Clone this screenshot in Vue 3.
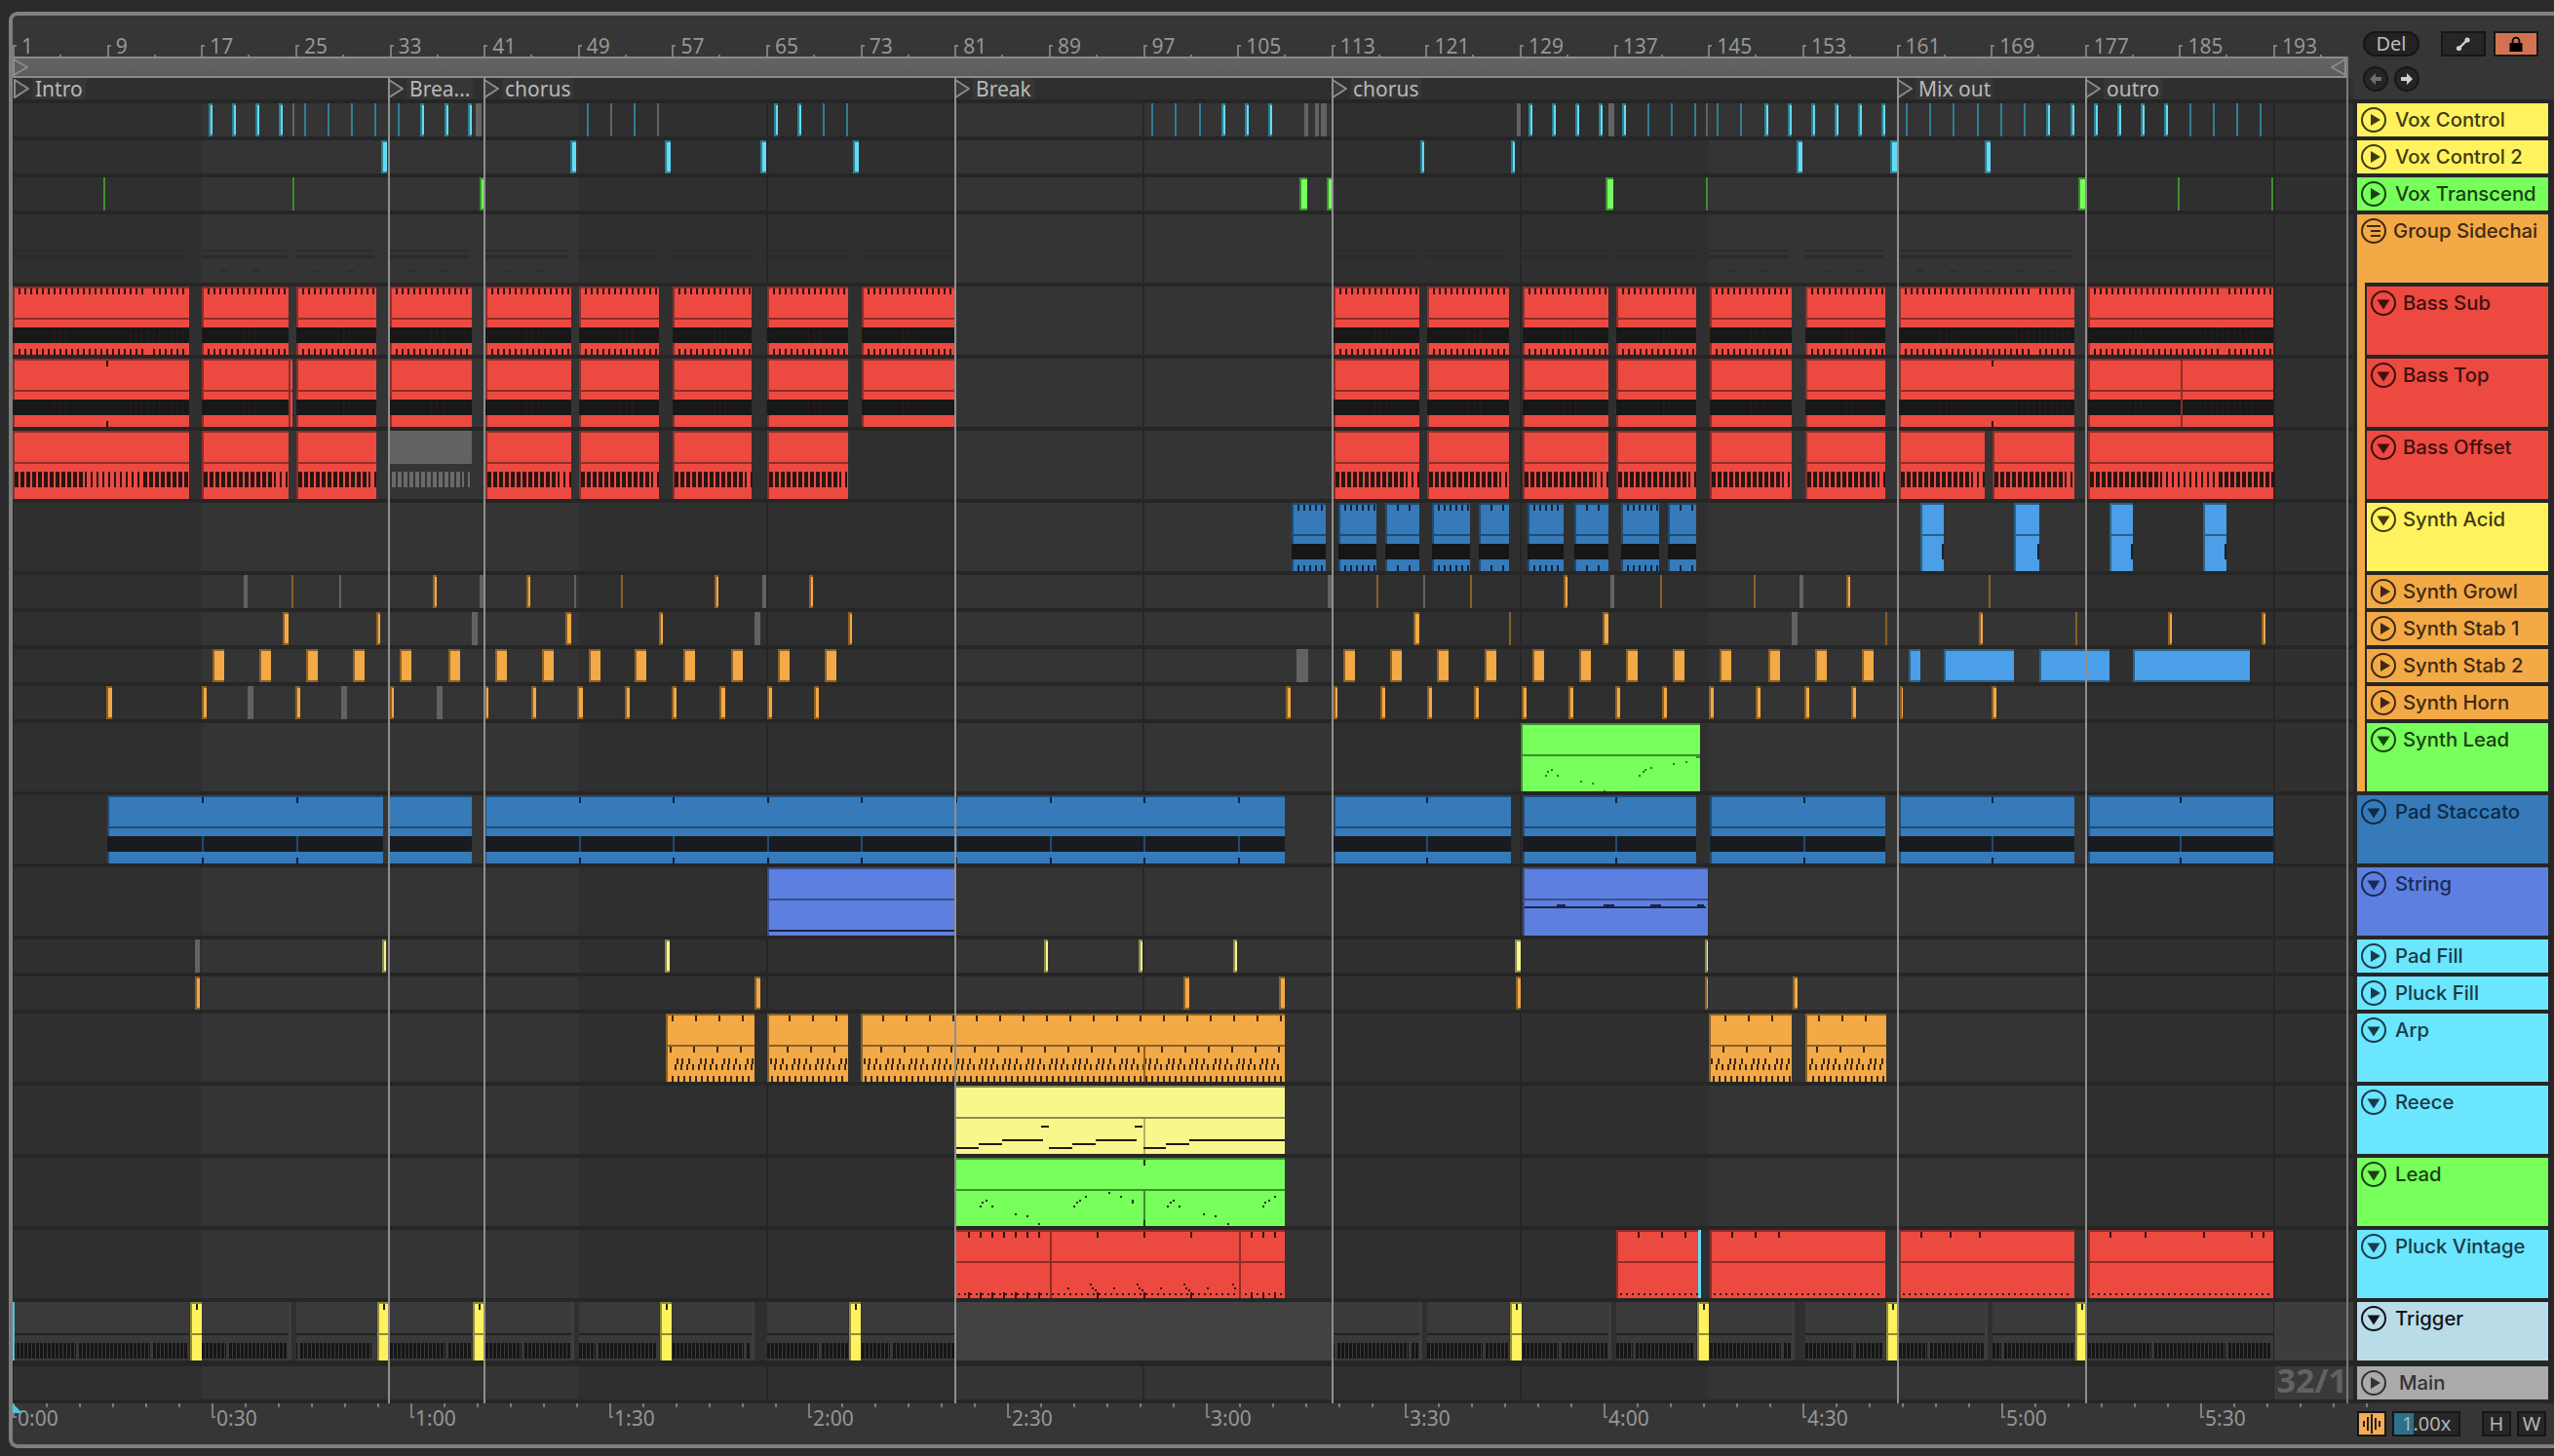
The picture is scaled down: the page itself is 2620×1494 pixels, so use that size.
<template>
  <div class="app">
    <div class="frame">
      <div class="top">
        <div class="top-left">
          <div class="beats">
            <div v-for="b in beatLabels" :key="b" class="beat"><span>{{ b }}</span></div>
          </div>
          <div class="loop">
            <svg class="loop-tri" width="16" height="18"><polygon points="1,1 15,9 1,17" /></svg>
            <svg class="loop-tri" width="16" height="18"><polygon points="15,1 1,9 15,17" /></svg>
          </div>
          <div class="locators">
            <div v-for="l in locators" :key="l.x" class="locator" :style="{ left: (l.x - X0) + 'px' }">
              <svg width="16" height="20"><polygon points="1,1 15,10 1,19" /></svg>
              <span>{{ l.name }}</span>
            </div>
          </div>
        </div>
        <div class="controls">
          <div class="ctl-row">
            <div class="del">Del</div>
            <div class="sq sq-link">
              <svg width="16" height="16" viewBox="0 0 16 16">
                <path d="M4 12 L12 4" stroke="#cfcfcf" stroke-width="2.4" />
                <circle cx="3.5" cy="12.5" r="2.6" fill="#cfcfcf" />
                <circle cx="12" cy="4" r="2.6" fill="#cfcfcf" />
              </svg>
            </div>
            <div class="sq sq-lock">
              <svg width="16" height="16" viewBox="0 0 16 16">
                <path d="M4.6 8 V5 a3.4 3.4 0 0 1 6.8 0 V8" fill="none" stroke="#000" stroke-width="1.8" />
                <rect x="1.5" y="7" width="13" height="9" fill="#000" />
              </svg>
            </div>
          </div>
          <div class="ctl-row ctl-arrows">
            <div class="arrow">
              <svg width="16" height="14" viewBox="0 0 16 14"><path d="M2 7 L8 1 V5 H14 V9 H8 V13 Z" fill="#6f6f6f" /></svg>
            </div>
            <div class="arrow">
              <svg width="16" height="14" viewBox="0 0 16 14"><path d="M14 7 L8 1 V5 H2 V9 H8 V13 Z" fill="#d0d0d0" /></svg>
            </div>
          </div>
        </div>
      </div>

      <div class="rows">
        <div v-for="t in tracks" :key="t.name" class="track" :class="['h' + t.h, { last: t.name === 'Main' }]">
          <div class="lane">
            <svg class="art" width="2401" :height="t.h" shape-rendering="crispEdges">
              <rect v-for="(r, i) in t.art" :key="i" :x="r.x" :y="r.y" :width="r.w" :height="r.h" :fill="r.f" />
            </svg>
            <span v-if="t.name === 'Main'" class="grid-size">32/1</span>
          </div>
          <div class="head" :class="['c-' + t.color, { nested: t.nested, 'is-group': t.type === 'group', 'is-main': t.name === 'Main' }]">
            <svg class="ico" width="26" height="26" viewBox="0 0 26 26">
              <circle cx="13" cy="13" r="12" fill="none" stroke="currentColor" stroke-width="2" />
              <polygon v-if="t.type === 'play'" points="10,7 20,13 10,19" fill="currentColor" />
              <polygon v-if="t.type === 'down'" points="6.5,9.5 19.5,9.5 13,19.5" fill="currentColor" />
              <g v-if="t.type === 'group'" stroke="currentColor" stroke-width="2">
                <path d="M6 8 H20 M10 13 H20 M10 18 H20" />
              </g>
            </svg>
            <span class="label">{{ t.name }}</span>
          </div>
        </div>
      </div>

      <div class="bottom">
        <div class="times">
          <div v-for="m in timeLabels" :key="m" class="time"><span>{{ m }}</span></div>
        </div>
        <div class="ctl-bottom">
          <div class="sq sq-wave">
            <svg width="20" height="20" viewBox="0 0 20 20" shape-rendering="crispEdges">
              <rect x="1" y="7" width="2" height="6" fill="#222" />
              <rect x="5" y="3" width="2" height="14" fill="#222" />
              <rect x="9" y="0" width="2" height="20" fill="#222" />
              <rect x="13" y="4" width="2" height="12" fill="#222" />
              <rect x="17" y="7" width="2" height="6" fill="#222" />
            </svg>
          </div>
          <div class="tempo">1.00x</div>
          <div class="sq sq-key first-key">H</div>
          <div class="sq sq-key">W</div>
        </div>
      </div>

      <i v-for="x in lineXs" :key="x" class="loc-line" :style="{ left: (x - X0) + 'px' }"></i>
      <i class="loc-line end-line" :style="{ left: (2407 - X0) + 'px' }"></i>
      <svg class="insert" width="10" height="12"><polygon points="0,0 10,10 0,10" fill="#4fc3dc" /></svg>
    </div>
  </div>
</template>

<script setup>
const X0 = 13

// clip colours: [fill, darker edge]
const P = {
  red: ['#ec4a41', '#8e2e29'],
  blue: ['#367ab9', '#1f4c73'],
  sky: ['#4a9fe8', '#2c6187'],
  orange: ['#f3a945', '#8a6128'],
  green: ['#77ff5c', '#3f8e2f'],
  pale: ['#f8f78c', '#8b8a50'],
  peri: ['#5d7fdf', '#3a4f8a'],
  cyan: ['#62dcf5', '#2f7f90'],
}
const GREY = '#626262'

const rect = (x, y, w, h, f) => ({ x: x - X0, y, w, h, f })

const beatX = (b) => 13.7 + (b - 1) * 12.08

function background(h) {
  const out = []
  const shades = [
    [1, 17, '#2f2f2f'], [17, 49, '#343434'], [49, 81, '#2f2f2f'], [81, 113, '#343434'],
    [113, 145, '#2f2f2f'], [145, 177, '#343434'], [177, 193, '#2f2f2f'], [193, 200, '#303030'],
  ]
  for (const [a, b, f] of shades) out.push(rect(beatX(a), 0, beatX(b) - beatX(a), h, f))
  for (const b of [65, 97, 129, 161, 193]) out.push(rect(beatX(b) - 1, 0, 2, h, '#262626'))
  return out
}

function block(x0, x1, c, h) {
  return [rect(x0, 0, x1 - x0, h, c[0]), rect(x0, 0, x1 - x0, 2, c[1]), rect(x0, 0, 2, h, c[1]), rect(x0, 32, x1 - x0, 2, c[1])]
}

// narrow clip: only the edge colour when it is a line, else edge + bright inside
function thin(x, w, c, h = 34) {
  const left = Math.round(x - w / 2)
  if (w <= 2) return [rect(left, 0, w, h, c[1])]
  return [rect(left, 0, w, h, c[1]), rect(left + 2, 2, w - 2, h - 4, c[0])]
}
const grey = (x, w, h = 34) => [rect(Math.round(x - w / 2), 0, w, h, GREY)]

const bassClips = [[13, 194], [207, 296], [304, 386], [400, 484], [498, 586], [594, 676], [690, 771], [787, 870], [884, 979],
  [1368, 1456], [1464, 1548], [1562, 1650], [1658, 1740], [1754, 1838], [1852, 1934], [1948, 2128], [2142, 2332]]

function band(x0, x1, f = '#181818', streak = '#281a1a') {
  const out = [rect(x0, 42, x1 - x0, 16, f)]
  if (streak) for (let x = x0 + 42; x < x1 - 4; x += 6) if ((x - x0) % 120 < 60) out.push(rect(x, 42, 1, 16, streak))
  return out
}

function ticks(x0, x1, step, y, h, f, skip = 0) {
  const out = []
  let i = 0
  for (let x = x0 + step; x < x1 - 2; x += step) {
    i++
    if (skip && i % skip === 0) continue
    out.push(rect(x, y, 2, h, f))
  }
  return out
}

function bassSub() {
  const a = background(70)
  for (const [x0, x1] of bassClips) {
    a.push(...block(x0, x1, P.red, 70), ...band(x0, x1))
    a.push(...ticks(x0, x1, 6, 2, 6, '#2a1210', 23), ...ticks(x0, x1, 6, 64, 6, '#2a1210', 23))
  }
  return a
}

function bassTop() {
  const a = background(70)
  for (const [x0, x1] of bassClips) a.push(...block(x0, x1, P.red, 70), ...band(x0, x1))
  a.push(...block(296, 300, P.red, 70))
  for (const x of [109, 2043, 2237]) a.push(rect(x, 2, 2, 6, '#2a1210'), rect(x, 64, 2, 6, '#2a1210'))
  a.push(rect(2237, 2, 2, 68, P.red[1]))
  return a
}

function bassOffset() {
  const a = background(70)
  const clips = [[13, 194], [207, 296], [304, 386], [400, 484, true], [498, 586], [594, 676], [690, 771], [787, 870],
    [1368, 1456], [1464, 1548], [1562, 1650], [1658, 1740], [1754, 1838], [1852, 1934], [1948, 2036], [2044, 2128], [2142, 2332]]
  for (const [x0, x1, off] of clips) {
    if (off) a.push(rect(x0, 0, x1 - x0, 34, GREY))
    else a.push(...block(x0, x1, P.red, 70))
    for (let x = x0; x < x1 - 2; x += 6) {
      const p = (x - x0) % 180
      a.push(rect(x + 2, 42, p >= 72 && p < 132 ? 2 : 4, 16, off ? '#6a6a6a' : '#2a1412'))
    }
  }
  return a
}

function groupGhost() {
  const a = background(70)
  for (const [x0, x1] of bassClips) {
    a.push(rect(x0, 36, x1 - x0 - 2, 2, '#2b2b2b'), rect(x0, 42, x1 - x0 - 2, 3, '#2b2b2b'))
    for (let x = x0 + 18; x < x1 - 10; x += 34) a.push(rect(x, 57, 8, 2, '#2d2d2d'))
  }
  return a
}

function acid() {
  const a = background(70)
  const clips = [[1325, 1360, 6], [1373, 1412, 6], [1421, 1456, 12], [1469, 1508, 6], [1517, 1548, 12], [1567, 1604, 6], [1615, 1650, 12], [1663, 1702, 6], [1711, 1740, 12]]
  for (const [x0, x1, s] of clips) {
    a.push(...block(x0, x1, P.blue, 70), ...band(x0, x1, '#141618', null))
    a.push(...ticks(x0, x1, s, 2, 6, '#0f2238'), ...ticks(x0, x1, s, 64, 6, '#0f2238'))
  }
  for (const [x0, x1] of [[1970, 1994], [2066, 2092], [2164, 2188], [2260, 2284]]) {
    a.push(...block(x0, x1, P.sky, 70), rect(x1 - 2, 42, 2, 16, '#14202c'))
  }
  return a
}

const vox1Bright = [216, 240, 264, 288, 433, 458, 482, 796, 820, 1255, 1279, 1303, 1570, 1594, 1618, 1642, 1666, 1812, 1836, 1860, 1884, 1908, 1932, 2101, 2126, 2150, 2174, 2198, 2222]
const vox1Thin = [313, 337, 361, 385, 409, 603, 651, 845, 869, 1182, 1206, 1231, 1691, 1715, 1739, 1762, 1786, 1956, 1980, 2004, 2029, 2053, 2077, 2247, 2271, 2295, 2319]
const vox1Grey = [[301, 2], [491, 6], [627, 2], [675, 2], [1340, 4], [1351, 4], [1358, 6], [1558, 4], [1653, 6], [1751, 2]]

function laneVox1() {
  const a = background(34)
  vox1Bright.forEach((x) => a.push(...thin(x, 4, P.cyan)))
  vox1Thin.forEach((x) => a.push(...thin(x, 2, P.cyan)))
  vox1Grey.forEach(([x, w]) => a.push(...grey(x, w)))
  return a
}

function pick(list, c, extra = []) {
  const a = background(34)
  list.forEach(([x, w]) => a.push(...thin(x, w, c)))
  extra.forEach(([x, w]) => a.push(...grey(x, w)))
  return a
}

const growl = pick(
  [[300, 2], [638, 2], [1413, 2], [1509, 2], [1704, 2], [1800, 2], [2041, 2], [446, 4], [542, 4], [735, 4], [832, 4], [1606, 4], [1896, 4]],
  P.orange,
  [[349, 2], [590, 2], [1461, 2], [252, 4], [494, 4], [784, 4], [1364, 4], [1654, 4], [1848, 4]],
)
const stab1 = pick(
  [[293, 6], [583, 6], [1453, 6], [1647, 6], [388, 4], [678, 4], [872, 4], [2032, 4], [2226, 4], [2322, 4], [1549, 2], [1935, 2], [2130, 2]],
  P.orange,
  [[487, 6], [777, 6], [1841, 6]],
)

function stab2() {
  const a = pick([224, 272, 320, 368, 416, 466, 514, 562, 610, 657, 707, 756, 804, 852, 1384, 1432, 1480, 1529, 1578, 1626, 1674, 1722, 1770, 1820, 1868, 1916].map((x) => [x, 12]), P.orange, [[1336, 12]])
  for (const [x0, x1] of [[1958, 1970], [1994, 2066], [2092, 2164], [2188, 2308]]) {
    a.push(rect(x0, 0, x1 - x0, 34, P.sky[1]), rect(x0 + 2, 2, x1 - x0 - 2, 30, P.sky[0]))
  }
  return a
}

const horn = pick(
  [[112, 6], [209, 5], [305, 5], [402, 4], [499, 4], [547, 5], [595, 6], [643, 5], [691, 5], [741, 6], [789, 5], [837, 5], [1321, 5], [1370, 4], [1418, 5], [1466, 5], [1514, 5], [1563, 5], [1611, 5], [1659, 5], [1707, 5], [1755, 5], [1803, 5], [1853, 5], [1901, 5], [1950, 3], [2045, 5]],
  P.orange,
  [[257, 6], [353, 6], [451, 6]],
)

const leadDots = [[421, 885], [424, 873], [430, 867], [439, 885], [475, 903], [492, 909], [510, 933], [563, 885], [569, 873], [572, 867], [581, 861], [616, 849], [634, 843]]
  .map(([x, y]) => [1300 + x / 1.479, 500 + y / 3 - 742])

function synthLead() {
  const a = background(70)
  a.push(...block(1560, 1744, P.green, 70))
  leadDots.forEach(([x, y]) => a.push(rect(x, y, 2, 2, '#2f7a22')))
  a.push(rect(1740, 32, 4, 4, P.green[1]))
  return a
}

function padStaccato() {
  const a = background(70)
  const clips = [[110, 393], [398, 484], [497, 1318], [1368, 1550], [1562, 1740], [1754, 1934], [1948, 2128], [2142, 2332]]
  for (const [x0, x1] of clips) a.push(...block(x0, x1, P.blue, 70), ...band(x0, x1, '#181c20', null))
  for (const b of [17, 25, 49, 57, 65, 73, 81, 89, 97, 105, 121, 137, 153, 169, 185]) {
    const x = Math.round(beatX(b))
    a.push(rect(x, 2, 2, 6, '#0f2238'), rect(x, 42, 2, 16, P.blue[1]), rect(x, 64, 2, 6, '#0f2238'))
  }
  return a
}

function strings() {
  const a = background(70)
  a.push(...block(787, 979, P.peri, 70), rect(789, 64, 190, 2, '#1c2340'))
  a.push(...block(1562, 1752, P.peri, 70), rect(1564, 40, 186, 2, '#1c2340'))
  for (const [x, w] of [[1597, 9], [1645, 11], [1693, 11], [1741, 7]]) a.push(rect(x, 38, w, 2, '#1c2340'))
  return a
}

function arp() {
  const a = background(70)
  const ink = '#3d2a12'
  for (const [x0, x1] of [[683, 774], [787, 870], [883, 1318], [1753, 1838], [1852, 1935]]) {
    a.push(...block(x0, x1, P.orange, 70))
    for (let k = 0; k < 60; k++) {
      const b = 689 + 24 * k
      for (const [dx, y, h] of [[0, 2, 6], [-2, 34, 6], [5, 46, 6], [10, 46, 6], [17, 46, 6]]) {
        if (b + dx > x0 + 1 && b + dx < x1 - 2) a.push(rect(b + dx, y, 2, h, ink))
      }
      for (let d = 0; d < 24; d += 6) {
        if (b + d > x0 + 2 && b + d < x1 - 2) a.push(rect(b + d, 64, 2, 6, ink))
        if (b + d + 3 > x0 + 2 && b + d + 3 < x1 - 2) a.push(rect(b + d + 3, 52, 2, 6, ink))
      }
    }
  }
  a.push(rect(1173, 34, 2, 36, P.orange[1]))
  return a
}

const X6 = (x) => 600 + x / 1.96

function reece() {
  const a = background(70)
  a.push(...block(979, 1318, P.pale, 70).filter((r) => r.w !== 2 || r.h !== 70))
  a.push(rect(1173, 34, 2, 36, '#b3b26a'))
  const notes = [[745, 792, 530], [792, 839, 518], [839, 921, 506], [917, 933, 464], [933, 980, 530], [980, 1027, 518], [1027, 1109, 506], [1105, 1121, 464], [1123, 1168, 530], [1168, 1215, 518], [1215, 1407, 506]]
  for (const [l, r, y] of notes) a.push(rect(X6(l), 1000 + y / 3 - 1114, (r - l) / 1.96, 2, '#1d1d12'))
  return a
}

const lead2Dots = [[794, 710], [798, 698], [805, 692], [817, 710], [864, 734], [887, 740], [911, 764], [982, 710], [988, 698], [993, 692], [1005, 680], [1052, 668], [1076, 680], [1100, 692], [1100, 698], [1170, 710], [1176, 698], [1181, 692], [1193, 710], [1243, 734], [1266, 740], [1292, 764], [1362, 710], [1366, 698], [1373, 692], [1385, 680]]

function lead2() {
  const a = background(70)
  a.push(...block(979, 1318, P.green, 70).filter((r) => r.w !== 2 || r.h !== 70))
  a.push(rect(1173, 34, 2, 36, P.green[1]), rect(1173, 2, 2, 6, '#1a3a12'), rect(1173, 64, 2, 6, '#1a3a12'))
  lead2Dots.forEach(([x, y]) => a.push(rect(X6(x), 1000 + y / 3 - 1188, 2, 2, '#173a10')))
  return a
}

const pvDots = [[970, 962], [1016, 950], [1020, 962], [1025, 968], [1063, 962], [1110, 950], [1114, 962], [1119, 968], [1157, 962], [1204, 950], [1208, 962], [1213, 968], [1251, 962], [1302, 950], [1305, 962]]

function pluckVintage() {
  const a = background(70)
  const ink = '#3a0f0c'
  for (const [x0, x1] of [[979, 1318], [1658, 1744], [1754, 1934], [1948, 2128], [2142, 2332]]) {
    a.push(...block(x0, x1, P.red, 70))
    for (let x = x0 + 4; x < x1 - 2; x += 6) a.push(rect(x, 65, 2, 2, ink))
  }
  for (const x of [1077, 1271]) a.push(rect(x, 2, 2, 68, P.red[1]))
  for (const x of [993, 1005, 1017, 1029, 1041, 1053, 1065, 1125, 1173, 1221, 1283, 1295, 1307, 2309, 2321, 1680, 1704, 1728, 1776, 1800, 1824, 1970, 2000, 2030, 2164, 2200, 2260]) {
    a.push(rect(x, 2, 2, 6, ink))
  }
  for (const x of [993, 1005, 1017, 1029, 1041, 1053, 1065, 1125, 1173, 1221, 1283, 1295, 1307]) a.push(rect(x, 64, 2, 6, ink))
  pvDots.forEach(([x, y]) => a.push(rect(X6(x), 1000 + y / 3 - 1262, 2, 2, ink)))
  a.push(rect(1742, 0, 3, 70, '#62dcf5'))
  return a
}

function trigger() {
  const a = background(60)
  a.push(rect(979, 0, 388, 60, '#424242'), rect(2333, 0, 81, 60, '#3d3d3d'))
  for (const [x0, x1] of bassClips) {
    a.push(rect(x0, 0, x1 - x0, 60, '#3a3a3a'), rect(x0, 32, x1 - x0, 2, '#222'))
    for (let x = x0; x < x1 - 2; x += 4) {
      a.push(rect(x, 42, x % 76 < 4 ? 1 : 3, 16, '#161616'))
    }
  }
  for (const [x0, x1] of [[296, 304], [586, 594], [771, 787], [1456, 1464], [1650, 1658], [1838, 1852], [2036, 2044]]) {
    a.push(rect(x0, 0, x1 - x0, 60, '#2f2f2f'), rect(x0, 0, 3, 60, '#3e3e3e'))
  }
  for (const x0 of [195, 387, 485, 677, 871, 1549, 1741, 1935, 2129]) {
    a.push(rect(x0, 0, 12, 60, '#fff25e'), rect(x0, 0, 12, 2, '#8f8a3a'), rect(x0, 0, 2, 60, '#8f8a3a'), rect(x0, 32, 12, 2, '#8f8a3a'), rect(x0 + 6, 2, 2, 6, '#222'))
  }
  a.push(rect(13, 0, 2, 60, '#4fc3dc'))
  return a
}

function mainLane() {
  const a = background(34)
  a.push(rect(2333, 0, 81, 34, '#3a3a3a'))
  return a
}

const tracks = [
  { name: 'Vox Control', color: 'yellow', type: 'play', h: 34, art: laneVox1() },
  { name: 'Vox Control 2', color: 'yellow', type: 'play', h: 34, art: pick([[394, 6], [588, 6], [685, 6], [783, 6], [878, 6], [1459, 4], [1552, 4], [1846, 6], [1943, 8], [2039, 6]], P.cyan) },
  { name: 'Vox Transcend', color: 'green', type: 'play', h: 34, art: pick([[107, 2], [301, 2], [1751, 2], [2235, 2], [2331, 2], [494, 5], [1337, 8], [1363, 5], [1651, 8], [2136, 8]], P.green) },
  { name: 'Group Sidechai', color: 'orange', type: 'group', h: 70, art: groupGhost() },
  { name: 'Bass Sub', color: 'red', type: 'down', h: 70, nested: true, art: bassSub() },
  { name: 'Bass Top', color: 'red', type: 'down', h: 70, nested: true, art: bassTop() },
  { name: 'Bass Offset', color: 'red', type: 'down', h: 70, nested: true, art: bassOffset() },
  { name: 'Synth Acid', color: 'yellow', type: 'down', h: 70, nested: true, art: acid() },
  { name: 'Synth Growl', color: 'orange', type: 'play', h: 34, nested: true, art: growl },
  { name: 'Synth Stab 1', color: 'orange', type: 'play', h: 34, nested: true, art: stab1 },
  { name: 'Synth Stab 2', color: 'orange', type: 'play', h: 34, nested: true, art: stab2() },
  { name: 'Synth Horn', color: 'orange', type: 'play', h: 34, nested: true, art: horn },
  { name: 'Synth Lead', color: 'green', type: 'down', h: 70, nested: true, art: synthLead() },
  { name: 'Pad Staccato', color: 'blue', type: 'down', h: 70, art: padStaccato() },
  { name: 'String', color: 'peri', type: 'down', h: 70, art: strings() },
  { name: 'Pad Fill', color: 'cyan', type: 'play', h: 34, art: pick([[394, 4], [684, 5], [1073, 4], [1170, 4], [1267, 4], [1557, 6], [1750, 3]], P.pale, [[202, 5]]) },
  { name: 'Pluck Fill', color: 'cyan', type: 'play', h: 34, art: pick([[202, 5], [777, 6], [1217, 6], [1315, 6], [1557, 5], [1750, 3], [1841, 5]], P.orange) },
  { name: 'Arp', color: 'cyan', type: 'down', h: 70, art: arp() },
  { name: 'Reece', color: 'cyan', type: 'down', h: 70, art: reece() },
  { name: 'Lead', color: 'green', type: 'down', h: 70, art: lead2() },
  { name: 'Pluck Vintage', color: 'cyan', type: 'down', h: 70, art: pluckVintage() },
  { name: 'Trigger', color: 'ice', type: 'down', h: 60, art: trigger() },
  { name: 'Main', color: 'grey', type: 'play', h: 34, art: mainLane() },
]

const beatLabels = Array.from({ length: 25 }, (_, i) => 1 + i * 8)
const timeLabels = Array.from({ length: 12 }, (_, i) => `${Math.floor(i / 2)}:${i % 2 ? '30' : '00'}`)

const locators = [
  { x: 14, name: 'Intro' }, { x: 398, name: 'Brea...' }, { x: 496, name: 'chorus' }, { x: 979, name: 'Break' },
  { x: 1366, name: 'chorus' }, { x: 1946, name: 'Mix out' }, { x: 2139, name: 'outro' },
]
const lineXs = locators.slice(1).map((l) => l.x)
</script>

<style scoped>
.app {
  width: 2620px;
  height: 1494px;
  box-sizing: border-box;
  padding: 12px 0 8px 9px;
  background: #2b2b2b;
  font-family: "Noto Sans", sans-serif;
  overflow: hidden;
}
.frame {
  position: relative;
  height: 100%;
  box-sizing: border-box;
  border: 4px solid #7f7f7f;
  border-right: none;
  border-radius: 9px 0 0 9px;
  background: #262626;
  display: flex;
  flex-direction: column;
  gap: 4px;
}

/* top: ruler, loop brace, locators */
.top {
  display: flex;
  height: 86px;
  background: #363636;
  border-radius: 6px 0 0 0;
}
.top-left {
  width: 2401px;
  display: flex;
  flex-direction: column;
}
.beats {
  height: 42px;
  display: flex;
  box-sizing: border-box;
}
.beat {
  width: 96.64px;
  flex: none;
  box-sizing: border-box;
  color: #959595;
  font-size: 21px;
  line-height: 20px;
  padding: 21px 0 0 9px;
  background:
    linear-gradient(#7c7c7c, #7c7c7c) 0 30px / 2px 12px no-repeat,
    linear-gradient(#7c7c7c, #7c7c7c) 0 30px / 4px 2px no-repeat,
    linear-gradient(#7c7c7c, #7c7c7c) 48px 40px / 2px 2px no-repeat;
}
.loop {
  width: 2394px;
  height: 22px;
  box-sizing: border-box;
  border-top: 2px solid #8b8b8b;
  border-bottom: 2px solid #8b8b8b;
  background: linear-gradient(#636363, #5c5c5c);
  display: flex;
  justify-content: space-between;
}
.loop-tri {
  display: block;
}
.loop-tri polygon {
  fill: #5f5f5f;
  stroke: #8b8b8b;
  stroke-width: 2;
}
.locators {
  flex: 1;
  position: relative;
  background: #2f2f2f;
}
.locator {
  position: absolute;
  top: 0;
  height: 22px;
  display: flex;
  align-items: flex-start;
}
.locator svg {
  flex: none;
  margin-top: 1px;
}
.locator polygon {
  fill: #3a3a3a;
  stroke: #8b8b8b;
  stroke-width: 2;
}
.locator span {
  margin-left: 3px;
  padding: 0 3px;
  height: 22px;
  line-height: 22px;
  font-size: 21px;
  color: #b9b9b9;
  background: #363636;
  white-space: nowrap;
}

.controls {
  flex: 1;
  padding: 16px 0 0 10px;
}
.ctl-row {
  display: flex;
  align-items: flex-start;
}
.ctl-arrows {
  margin-top: 10px;
  gap: 6px;
}
.del {
  width: 58px;
  height: 26px;
  box-sizing: border-box;
  border: 2px solid #141414;
  border-radius: 13px;
  background: #222;
  color: #bcbcbc;
  font-size: 20px;
  line-height: 21px;
  text-align: center;
  margin-right: 22px;
}
.sq {
  box-sizing: border-box;
  border: 2px solid #161616;
  background: #262626;
  display: flex;
  align-items: center;
  justify-content: center;
}
.sq-link,
.sq-lock {
  width: 46px;
  height: 26px;
}
.sq-lock {
  background: #d17350;
  margin-left: 8px;
}
.arrow {
  width: 26px;
  height: 26px;
  box-sizing: border-box;
  border: 2px solid #171717;
  border-radius: 50%;
  background: #252525;
  display: flex;
  align-items: center;
  justify-content: center;
}

/* tracks */
.rows {
  height: 1330px;
  display: flex;
  flex-direction: column;
  gap: 4px;
}
.track {
  display: flex;
  gap: 4px;
  flex: none;
}
.h34 { height: 34px; }
.h60 { height: 60px; }
.h70 { height: 70px; }
.last { margin-top: 2px; }
.lane {
  width: 2401px;
  flex: none;
  position: relative;
}
.art {
  display: block;
}
.grid-size {
  position: absolute;
  right: 6px;
  top: 0;
  font-size: 34px;
  font-weight: 700;
  line-height: 28px;
  color: #626262;
  white-space: nowrap;
}
.head {
  width: 196px;
  flex: none;
  position: relative;
  box-sizing: border-box;
  padding: 4px 0 0 4px;
  display: flex;
  align-items: flex-start;
  gap: 9px;
  color: var(--ink);
}
.head::after {
  content: "";
  position: absolute;
  inset: 0;
  background: var(--bg);
}
.ico,
.label {
  position: relative;
  z-index: 1;
}
.ico {
  flex: none;
}
.label {
  font-family: Inter, "Noto Sans", sans-serif;
  font-weight: 500;
  font-size: 20.3px;
  line-height: 26px;
  white-space: nowrap;
}
.is-group {
  gap: 7px;
}
.is-main {
  gap: 13px;
}
.nested {
  padding-left: 14px;
  gap: 7px;
}
.nested::after {
  left: 10px;
}
.nested::before {
  content: "";
  position: absolute;
  left: 0;
  top: -4px;
  bottom: 0;
  width: 8px;
  background: #f3a945;
}
.c-yellow { --bg: #fff25e; --ink: #3f3c12; }
.c-green { --bg: #77ff5c; --ink: #1a4012; }
.c-orange { --bg: #f3a945; --ink: #3d2a12; }
.c-red { --bg: #ec4a41; --ink: #3e100e; }
.c-blue { --bg: #367ab9; --ink: #0e2a46; }
.c-peri { --bg: #5d7fdf; --ink: #1a2a58; }
.c-cyan { --bg: #6ae6ff; --ink: #1a3a46; }
.c-ice { --bg: #b8dde9; --ink: #101418; }
.c-grey { --bg: #aaaaaa; --ink: #333; }

/* bottom: time ruler */
.bottom {
  flex: 1;
  display: flex;
  background: #363636;
  border-radius: 0 0 0 6px;
}
.times {
  width: 2401px;
  flex: none;
  display: flex;
}
.time {
  width: 204px;
  flex: none;
  box-sizing: border-box;
  padding: 3px 0 0 5px;
  color: #959595;
  font-size: 21px;
  line-height: 24px;
  background:
    repeating-linear-gradient(to right, #7c7c7c 0 2px, transparent 2px 34px) 0 0 / 100% 4px no-repeat,
    linear-gradient(#7c7c7c, #7c7c7c) 0 0 / 2px 15px no-repeat,
    linear-gradient(#7c7c7c, #7c7c7c) 0 13px / 4px 2px no-repeat;
}
.ctl-bottom {
  flex: 1;
  display: flex;
  padding: 8px 0 0 4px;
  align-items: flex-start;
}
.sq-wave {
  width: 30px;
  height: 26px;
  background: #f5ac52;
}
.tempo {
  width: 70px;
  height: 26px;
  margin-left: 6px;
  box-sizing: border-box;
  border: 2px solid #161616;
  background: linear-gradient(to right, #2d7089 0 20px, #262626 20px);
  color: #b4b4b4;
  font-size: 20px;
  line-height: 22px;
  padding-left: 8px;
}
.sq-key {
  width: 30px;
  height: 26px;
  margin-left: 6px;
  color: #b4b4b4;
  font-size: 20px;
  line-height: 20px;
}
.first-key {
  margin-left: 22px;
}

.loc-line {
  position: absolute;
  top: 64px;
  bottom: 42px;
  width: 2px;
  background: #8f8f8f;
  z-index: 2;
}
.end-line {
  top: 42px;
  background: #7a7a7a;
}
.insert {
  position: absolute;
  left: 0;
  bottom: 30px;
  z-index: 3;
}
</style>
